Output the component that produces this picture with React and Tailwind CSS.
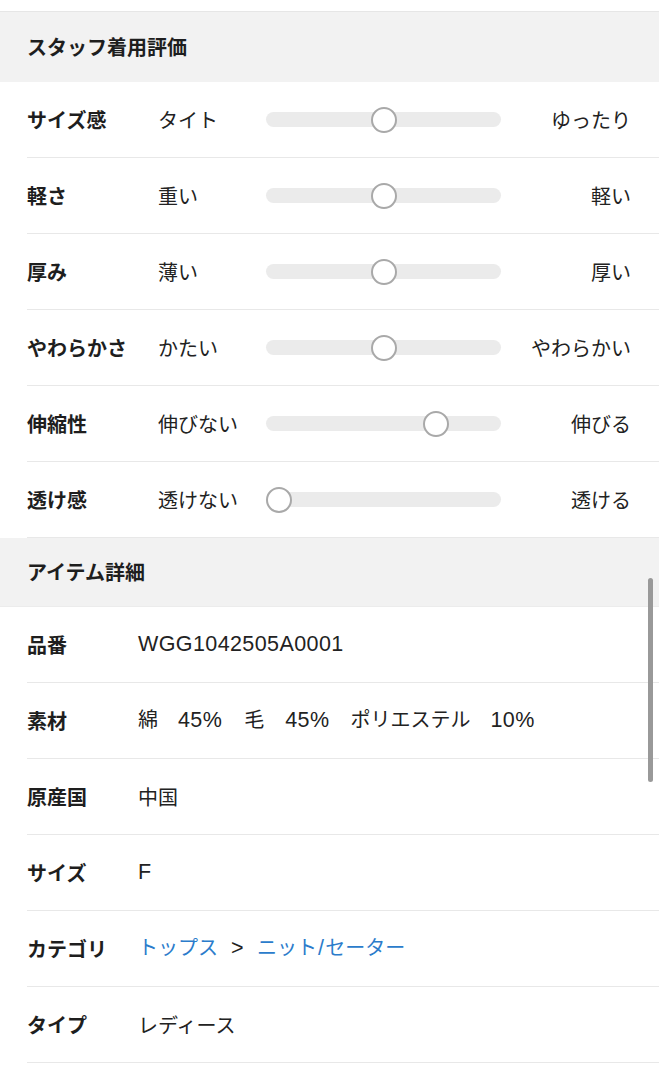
import React from "react";

const font = {
  fontFamily: '"Noto Sans CJK JP", "Noto Sans", sans-serif',
};

const latin = {
  fontFamily: '"Liberation Sans", "Noto Sans CJK JP", sans-serif',
};

function L({ children, className = "" }) {
  return (
    <span className={`text-[21.5px] tracking-[0.4px] ${className}`} style={latin}>
      {children}
    </span>
  );
}

const sliders = [
  ["サイズ感", "タイト", "ゆったり", 3],
  ["軽さ", "重い", "軽い", 3],
  ["厚み", "薄い", "厚い", 3],
  ["やわらかさ", "かたい", "やわらかい", 3],
  ["伸縮性", "伸びない", "伸びる", 4],
  ["透け感", "透けない", "透ける", 1],
];

function Slider({ value }) {
  const pct = (value - 1) / 4;
  const left = pct * (235 - 26);
  return (
    <div className="relative w-[235px] h-[26px] flex items-center">
      <div className="w-full h-[15px] rounded-full bg-[#ebebeb]" />
      <div
        className="absolute top-0 w-[26px] h-[26px] rounded-full bg-white border-[2.5px] border-[#a9a9a9]"
        style={{ left: `${left}px` }}
      />
    </div>
  );
}

function SectionHeader({ children, h }) {
  return (
    <div className={`bg-[#f2f2f2] flex items-center pl-[27px] ${h}`}>
      <span className="text-[20px] font-bold text-[#1e1e1e]">{children}</span>
    </div>
  );
}

function DetailRow({ label, children }) {
  return (
    <div className="ml-[27px] h-[76px] border-b border-[#e8e8e8] flex items-center">
      <span className="w-[111px] shrink-0 text-[20px] font-bold text-[#1e1e1e]">{label}</span>
      <div className="text-[20px] text-[#222] flex items-baseline">{children}</div>
    </div>
  );
}

export default function App() {
  return (
    <div className="relative w-[659px] bg-white" style={font}>
      <div className="h-[12px] bg-white border-b border-[#e6e6e6]" />
      <SectionHeader h="h-[70px]">スタッフ着用評価</SectionHeader>
      {sliders.map(([label, l, r, v]) => (
        <div
          key={label}
          className="ml-[27px] h-[76px] border-b border-[#e8e8e8] flex items-center"
        >
          <span className="w-[131px] shrink-0 text-[20px] font-bold text-[#1e1e1e]">{label}</span>
          <span className="w-[108px] shrink-0 text-[20px] text-[#222]">{l}</span>
          <Slider value={v} />
          <span className="flex-1 text-right pr-[28px] text-[20px] text-[#222]">{r}</span>
        </div>
      ))}
      <div className="border-b border-[#ececec]">
        <SectionHeader h="h-[68px]">アイテム詳細</SectionHeader>
      </div>
      <DetailRow label="品番">
        <span className="text-[20px]">
          <L>WGG1042505A0001</L>
        </span>
      </DetailRow>
      <DetailRow label="素材">
        <span>綿</span>
        <L className="ml-[20px]">45%</L>
        <span className="ml-[22px]">毛</span>
        <L className="ml-[21px]">45%</L>
        <span className="ml-[21px]">ポリエステル</span>
        <L className="ml-[20px]">10%</L>
      </DetailRow>
      <DetailRow label="原産国">中国</DetailRow>
      <DetailRow label="サイズ">
        <span>
          <L>F</L>
        </span>
      </DetailRow>
      <DetailRow label="カテゴリ">
        <span className="text-[#2b7ccb]">トップス</span>
        <L className="mx-[13px]">&gt;</L>
        <span className="text-[#2b7ccb]">
          ニット<L className="mx-[1px]">/</L>セーター
        </span>
      </DetailRow>
      <DetailRow label="タイプ">レディース</DetailRow>
      <div className="h-[20px]" />
      <div className="absolute right-[6px] top-[578px] w-[5px] h-[204px] rounded-full bg-[#999]" />
    </div>
  );
}
